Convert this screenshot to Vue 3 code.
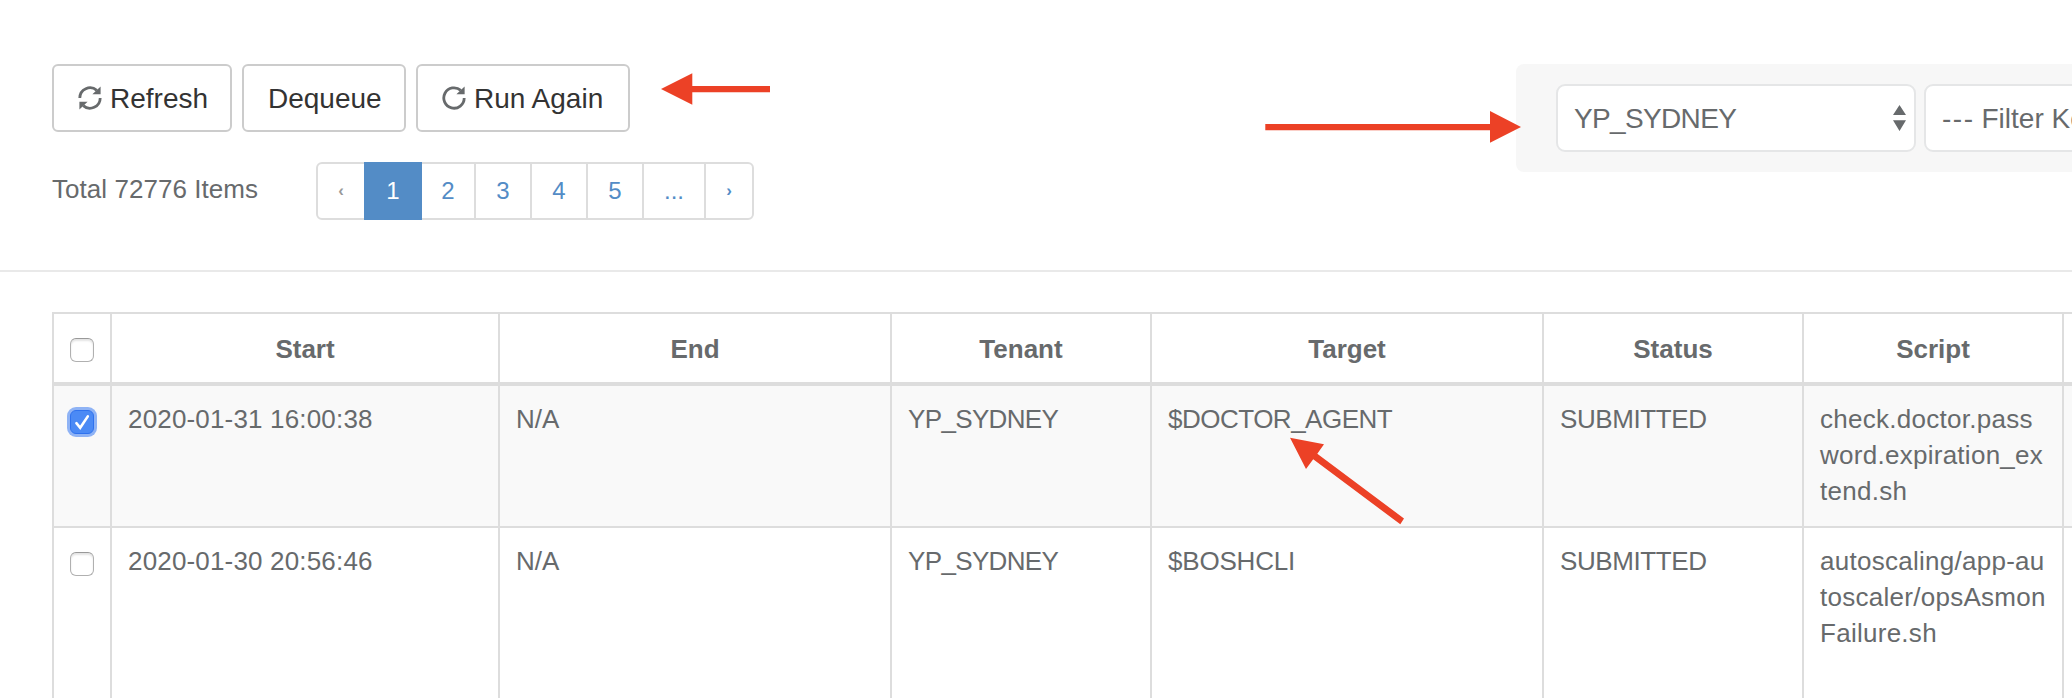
<script setup>
import { ref } from 'vue'

const pages = ['1', '2', '3', '4', '5', '...']
const current = ref('1')
const headers = ['Start', 'End', 'Tenant', 'Target', 'Status', 'Script']
const rows = ref([
  {
    checked: true,
    start: '2020-01-31 16:00:38',
    end: 'N/A',
    tenant: 'YP_SYDNEY',
    target: '$DOCTOR_AGENT',
    status: 'SUBMITTED',
    script: ['check.doctor.pass', 'word.expiration_ex', 'tend.sh'],
  },
  {
    checked: false,
    start: '2020-01-30 20:56:46',
    end: 'N/A',
    tenant: 'YP_SYDNEY',
    target: '$BOSHCLI',
    status: 'SUBMITTED',
    script: ['autoscaling/app-au', 'toscaler/opsAsmon', 'Failure.sh'],
  },
])
</script>

<template>
  <div class="page">
    <header class="top">
      <div class="left">
        <div class="buttons">
          <button class="btn refresh">
            <svg class="icon" viewBox="0 0 24 24">
              <path class="line" d="M1.8 12A10.2 10.2 0 0 1 18.8 4.4M22.2 12A10.2 10.2 0 0 1 5.200 19.600" />
              <path class="solid" d="M22.6.6V8.300h-8.200zM1.400 23.400V15.700h8.200z" />
            </svg>
            <span>Refresh</span>
          </button>
          <button class="btn dequeue"><span>Dequeue</span></button>
          <button class="btn again">
            <svg class="icon" viewBox="0 0 24 24">
              <path class="line" d="M22.2 12A10.2 10.2 0 1 1 18.8 4.4" />
              <path class="solid" d="M22.6.6V8.300h-8.200z" />
            </svg>
            <span>Run Again</span>
          </button>
        </div>
        <div class="paging">
          <span class="total">Total 72776 Items</span>
          <nav class="pager">
            <a class="step prev">‹</a>
            <a v-for="p in pages" :key="p" :class="{ active: p === current, dots: p === '...' }" @click="current = p">{{ p }}</a>
            <a class="step next">›</a>
          </nav>
        </div>
      </div>
      <div class="filters">
        <div class="select tenant-select">
          <span>YP_SYDNEY</span>
          <svg class="updown" viewBox="0 0 13 26"><path d="M6.5 0 13 10H0zM0 15.3h13L6.5 26z" /></svg>
        </div>
        <div class="select key-select"><span class="dashes">---</span><span>Filter Key</span></div>
      </div>
    </header>

    <main class="grid">
      <div class="row head">
        <div class="cell check"><i class="box"></i></div>
        <div v-for="h in headers" :key="h" class="cell">{{ h }}</div>
        <div class="cell"></div>
      </div>
      <div v-for="r in rows" :key="r.start" class="row body" :class="{ striped: r.checked }">
        <div class="cell check">
          <i class="box" :class="{ on: r.checked }">
            <svg v-if="r.checked" viewBox="0 0 24 24"><path d="M6.4 13.2 10.2 17.800 17.800 6.400" /></svg>
          </i>
        </div>
        <div class="cell start">{{ r.start }}</div>
        <div class="cell">{{ r.end }}</div>
        <div class="cell tenant">{{ r.tenant }}</div>
        <div class="cell target">{{ r.target }}</div>
        <div class="cell status">{{ r.status }}</div>
        <div class="cell script"><div v-for="s in r.script" :key="s">{{ s }}</div></div>
        <div class="cell"></div>
      </div>
    </main>

    <svg class="arrows" viewBox="0 0 2072 698">
      <path d="M661 89 692.3 73.3V86H770v6.3h-77.7v12.4z" />
      <path d="M1521 127 1490 111v13h-224.700v6.300H1490v12.400z" />
      <path d="M1290 437.700 1324 444.300 1317.300 453.800 1404 518.500 1400.300 524.300 1313.200 459.300 1306 469z" />
    </svg>
  </div>
</template>

<style>
body { margin: 0; overflow: hidden; background: #fff; }
</style>

<style scoped>
* { box-sizing: border-box; }
.page {
  position: relative;
  width: 2072px;
  height: 698px;
  overflow: hidden;
  background: #fff;
  color: #676a6c;
  font: 26px/36px "Liberation Sans", Arial, sans-serif;
}
.top {
  display: flex;
  justify-content: space-between;
  height: 272px;
  padding: 64px 0 0 52px;
  border-bottom: 2px solid #e9e9e9;
}
.buttons { display: flex; gap: 10px; }
.btn {
  display: flex;
  align-items: center;
  height: 68px;
  padding: 0 0 0 24px;
  border: 2px solid #ccc;
  border-radius: 6px;
  background: #fff;
  color: #333;
  font: 28px/40px "Liberation Sans", Arial, sans-serif;
  white-space: nowrap;
}
.btn span { padding-top: 1px; }
.refresh { width: 180px; }
.dequeue { width: 164px; }
.again { width: 214px; }
.icon { width: 24px; height: 24px; margin-right: 8px; color: #676a6c; }
.line { fill: none; stroke: currentColor; stroke-width: 2.8; }
.solid { fill: currentColor; }
.paging { display: flex; margin-top: 30px; height: 58px; }
.total { width: 264px; padding-top: 9px; letter-spacing: 0.05px; white-space: nowrap; }
.pager {
  display: flex;
  width: 438px;
  border: 2px solid #ddd;
  border-radius: 6px;
  color: #538cc6;
  font-size: 24px;
  line-height: 53px;
  text-align: center;
}
.pager a { width: 56px; border-right: 2px solid #ddd; }
.pager .prev { width: 46px; border: 0; color: #999; }
.pager .active { width: 58px; margin: -2px 0; border: 0; background: #538cc6; color: #fff; line-height: 57px; }
.pager a.active + a { width: 54px; }
.pager .dots { width: 62px; }
.pager .next { width: 46px; border: 0; }
.pager .step { font-size: 17px; font-weight: 700; line-height: 54px; }
.filters {
  display: flex;
  gap: 8px;
  width: 556px;
  height: 108px;
  padding: 20px 0 0 40px;
  border-radius: 8px 0 0 8px;
  background: #f7f7f7;
  overflow: hidden;
}
.select {
  display: flex;
  flex: none;
  align-items: center;
  width: 360px;
  height: 68px;
  padding: 0 8px 0 16px;
  border: 2px solid #e5e6e7;
  border-radius: 9px;
  background: #fff;
  font-size: 28px;
  white-space: nowrap;
}
.select span { padding-top: 1px; }
.tenant-select { justify-content: space-between; letter-spacing: -0.65px; }
.dashes { margin-right: 7px; letter-spacing: 1.5px; }
.updown { width: 13px; height: 26px; fill: #676a6c; }
.grid { margin: 40px 0 0 52px; border-top: 2px solid #ddd; border-left: 2px solid #ddd; }
.row { display: grid; grid-template-columns: 58px 388px 392px 260px 392px 260px 260px 60px; }
.cell { padding: 15px 12px 17px 16px; border-right: 2px solid #ddd; white-space: nowrap; }
.head { height: 72px; border-bottom: 4px solid #ddd; font-weight: 700; text-align: center; }
.head .cell { padding: 17px 0 0; }
.body { height: 142px; border-bottom: 2px solid #ddd; }
.body:last-child { height: 180px; }
.striped { background: #f9f9f9; }
.start { letter-spacing: 0.17px; }
.tenant { letter-spacing: -0.65px; }
.target { letter-spacing: -0.5px; }
.body:last-child .target { letter-spacing: -0.2px; }
.status { letter-spacing: -0.4px; }
.script { letter-spacing: 0.27px; }
.row .check { padding: 24px 0 0 16px; }
.box {
  display: block;
  width: 24px;
  height: 24px;
  border: 1px solid #b0b0b0;
  border-top-color: #999;
  border-radius: 6px;
  background: #fff;
  box-shadow: inset 0 2px 2px #e4e4e4;
}
.box.on { border: 1px solid #2f72ee; background: #4b8af5; box-shadow: 0 0 0 3px #8fb3f5; }
.box svg { display: block; width: 24px; height: 24px; margin: -1px; fill: none; stroke: #fff; stroke-width: 2.6; stroke-linecap: round; }
.arrows { position: absolute; inset: 0; width: 2072px; height: 698px; fill: #ec4126; pointer-events: none; }
</style>
